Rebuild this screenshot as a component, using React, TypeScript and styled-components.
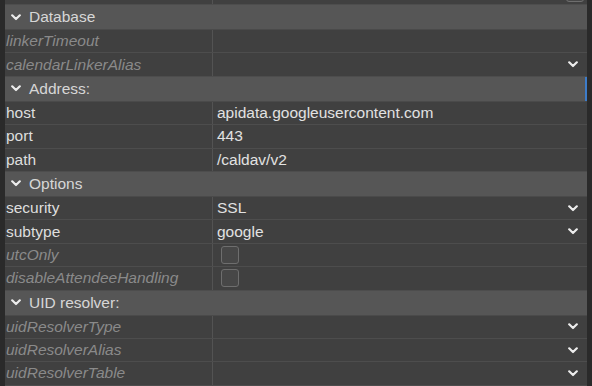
import React from 'react';
import styled, { createGlobalStyle } from 'styled-components';

const GlobalStyle = createGlobalStyle`
    html, body {
        margin: 0;
        padding: 0;
        background: #2b2b2b;
    }
    body {
        font-family: "Liberation Sans", Arial, sans-serif;
    }
`;

const Frame = styled.div`
    display: flex;
    width: 592px;
    height: 386px;
    overflow: hidden;
    background: #2b2b2b;
`;

const Strip = styled.div`
    flex: 0 0 5px;
    background: #2a2a2a;
`;

const Sheet = styled.div`
    flex: 1;
    display: flex;
    flex-direction: column;
    margin-top: -18.4px;
    background: #3f3f3f;
`;

const GroupRow = styled.div<{ focused?: boolean }>`
    display: flex;
    align-items: center;
    gap: 8px;
    height: 24px;
    padding-left: 6px;
    background: #565656;
    border-bottom: 1px solid #4a4a4a;
    box-shadow: ${({ focused }) => (focused ? 'inset -2px 0 0 #3d7cc9' : 'none')};
    color: #d6d6d6;
    font-size: 15.5px;
    flex-shrink: 0;
`;

const PropRow = styled.div`
    display: grid;
    grid-template-columns: 208px 1fr;
    height: 22.4px;
    border-bottom: 1px solid #4d4d4d;
    background: #404040;
    flex-shrink: 0;
`;

const Label = styled.div<{ muted?: boolean }>`
    display: flex;
    align-items: center;
    padding-left: 1px;
    font-size: 15.5px;
    font-style: ${({ muted }) => (muted ? 'italic' : 'normal')};
    color: ${({ muted }) => (muted ? '#8a8a8a' : '#dedede')};
    border-right: 1px solid #535353;
    white-space: nowrap;
    overflow: hidden;
`;

const Value = styled.div`
    display: flex;
    align-items: center;
    justify-content: space-between;
    padding: 0 9px 0 4px;
    font-size: 15.5px;
    color: #e2e2e2;
    white-space: nowrap;
`;

const Check = styled.span<{ edge?: boolean }>`
    display: inline-block;
    width: 16px;
    height: 16px;
    margin-left: ${({ edge }) => (edge ? '0' : '4px')};
    margin-right: ${({ edge }) => (edge ? '-6px' : '0')};
    border: 1px solid #6e6e6e;
    border-radius: 3px;
    background: #474747;
`;

const Chevron: React.FC = () => (
    <svg width="10" height="7" viewBox="0 0 10 7">
        <polyline points="1.2,1.3 5,5 8.8,1.3" fill="none" stroke="#ececec" strokeWidth="2.2" strokeLinecap="round" strokeLinejoin="round" />
    </svg>
);

type Prop = {
    label: string;
    value?: string;
    muted?: boolean;
    select?: boolean;
    check?: boolean;
};

type Group = {
    title: string;
    focused?: boolean;
    props: Prop[];
};

const groups: Group[] = [
    {
        title: 'Database',
        props: [
            { label: 'linkerTimeout', muted: true },
            { label: 'calendarLinkerAlias', muted: true, select: true },
        ],
    },
    {
        title: 'Address:',
        focused: true,
        props: [
            { label: 'host', value: 'apidata.googleusercontent.com' },
            { label: 'port', value: '443' },
            { label: 'path', value: '/caldav/v2' },
        ],
    },
    {
        title: 'Options',
        props: [
            { label: 'security', value: 'SSL', select: true },
            { label: 'subtype', value: 'google', select: true },
            { label: 'utcOnly', muted: true, check: true },
            { label: 'disableAttendeeHandling', muted: true, check: true },
        ],
    },
    {
        title: 'UID resolver:',
        props: [
            { label: 'uidResolverType', muted: true, select: true },
            { label: 'uidResolverAlias', muted: true, select: true },
            { label: 'uidResolverTable', muted: true, select: true },
        ],
    },
];

const PropertyRow: React.FC<{ prop: Prop }> = ({ prop }) => (
    <PropRow>
        <Label muted={prop.muted}>{prop.label}</Label>
        <Value>
            {prop.check ? <Check /> : <span>{prop.value ?? ''}</span>}
            {prop.select && <Chevron />}
        </Value>
    </PropRow>
);

const App: React.FC = () => {
    return (
        <>
            <GlobalStyle />
            <Frame>
                <Strip />
                <Sheet>
                    <PropRow>
                        <Label muted />
                        <Value>
                            <span />
                            <Check edge />
                        </Value>
                    </PropRow>
                    {groups.map((g) => (
                        <React.Fragment key={g.title}>
                            <GroupRow focused={g.focused}>
                                <Chevron />
                                <span>{g.title}</span>
                            </GroupRow>
                            {g.props.map((p) => (
                                <PropertyRow key={p.label} prop={p} />
                            ))}
                        </React.Fragment>
                    ))}
                </Sheet>
                <Strip />
            </Frame>
        </>
    );
};

export default App;
